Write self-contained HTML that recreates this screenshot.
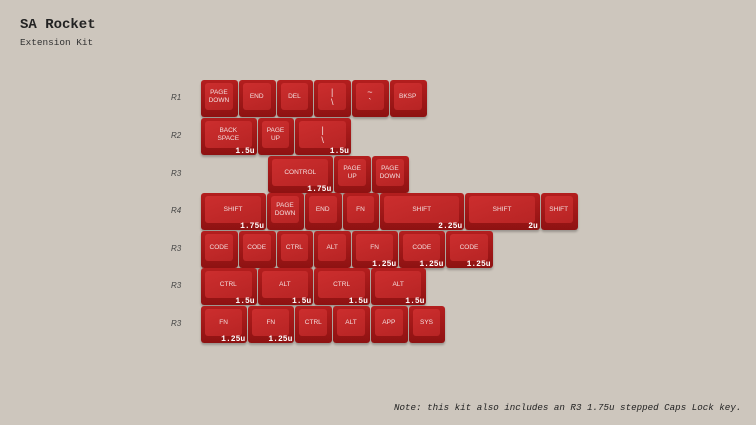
<!DOCTYPE html>
<html><head><meta charset="utf-8"><style>
body{margin:0;width:756px;height:425px;background:#cdc6bd;position:relative;overflow:hidden;font-family:"Liberation Sans",sans-serif}
.t{position:absolute;left:20px;top:17px;font:bold 14px "Liberation Mono",monospace;color:#222}
.s{position:absolute;left:20px;top:37px;font:9.4px "Liberation Mono",monospace;color:#333}
.n{position:absolute;left:394px;top:402px;font:italic 9.2px "Liberation Mono",monospace;color:#222;white-space:nowrap}
.r{position:absolute;left:171px;font:italic 8px "Liberation Sans",sans-serif;color:#444}
.k{position:absolute;height:37px;border-radius:3px;background:linear-gradient(#b41e1e,#8e1212);box-shadow:0 2px 2px rgba(0,0,0,.25)}
.k .f{position:absolute;left:4px;right:5px;top:3px;bottom:7px;border-radius:3px;background:linear-gradient(160deg,#cc2e2e,#b72424);display:flex;align-items:center;justify-content:center;text-align:center;color:#f2dede;font-size:6.5px;line-height:8px}
.k .f.g{font-size:9px;line-height:10px}
.k .u{position:absolute;right:2px;bottom:-1px;font:bold 8px "Liberation Mono",monospace;color:#fff}
</style></head><body>
<div class="t">SA Rocket</div>
<div class="s">Extension Kit</div>
<div class="n">Note: this kit also includes an R3 1.75u stepped Caps Lock key.</div>
<div id="c"></div>
<script>
var U=37.75,X=201,T=[80,118,156,193,231,268,306],L=["R1","R2","R3","R4","R3","R3","R3"];
var rows=[
[[0,1,"PAGE<br>DOWN"],[1,1,"END"],[2,1,"DEL"],[3,1,"|<br>\\",0,1],[4,1,"~<br>`",0,1],[5,1,"BKSP"]],
[[0,1.5,"BACK<br>SPACE","1.5u"],[1.5,1,"PAGE<br>UP"],[2.5,1.5,"|<br>\\","1.5u",1]],
[[1.78,1.75,"CONTROL","1.75u"],[3.53,1,"PAGE<br>UP"],[4.53,1,"PAGE<br>DOWN"]],
[[0,1.75,"SHIFT","1.75u"],[1.75,1,"PAGE<br>DOWN"],[2.75,1,"END"],[3.75,1,"FN"],[4.75,2.25,"SHIFT","2.25u"],[7,2,"SHIFT","2u"],[9,1,"SHIFT"]],
[[0,1,"CODE"],[1,1,"CODE"],[2,1,"CTRL"],[3,1,"ALT"],[4,1.25,"FN","1.25u"],[5.25,1.25,"CODE","1.25u"],[6.5,1.25,"CODE","1.25u"]],
[[0,1.5,"CTRL","1.5u"],[1.5,1.5,"ALT","1.5u"],[3,1.5,"CTRL","1.5u"],[4.5,1.5,"ALT","1.5u"]],
[[0,1.25,"FN","1.25u"],[1.25,1.25,"FN","1.25u"],[2.5,1,"CTRL"],[3.5,1,"ALT"],[4.5,1,"APP"],[5.5,1,"SYS"]]];
var h="";
rows.forEach(function(r,i){
h+='<div class="r" style="top:'+(T[i]+13)+'px">'+L[i]+'</div>';
r.forEach(function(k){
h+='<div class="k" style="left:'+(X+k[0]*U).toFixed(1)+'px;top:'+T[i]+'px;width:'+(k[1]*U-1).toFixed(1)+'px"><div class="f'+(k[4]?' g':'')+'">'+k[2]+'</div>'+(k[3]?'<div class="u">'+k[3]+'</div>':'')+'</div>';
});});
document.getElementById("c").innerHTML=h;
</script>
</body></html>
